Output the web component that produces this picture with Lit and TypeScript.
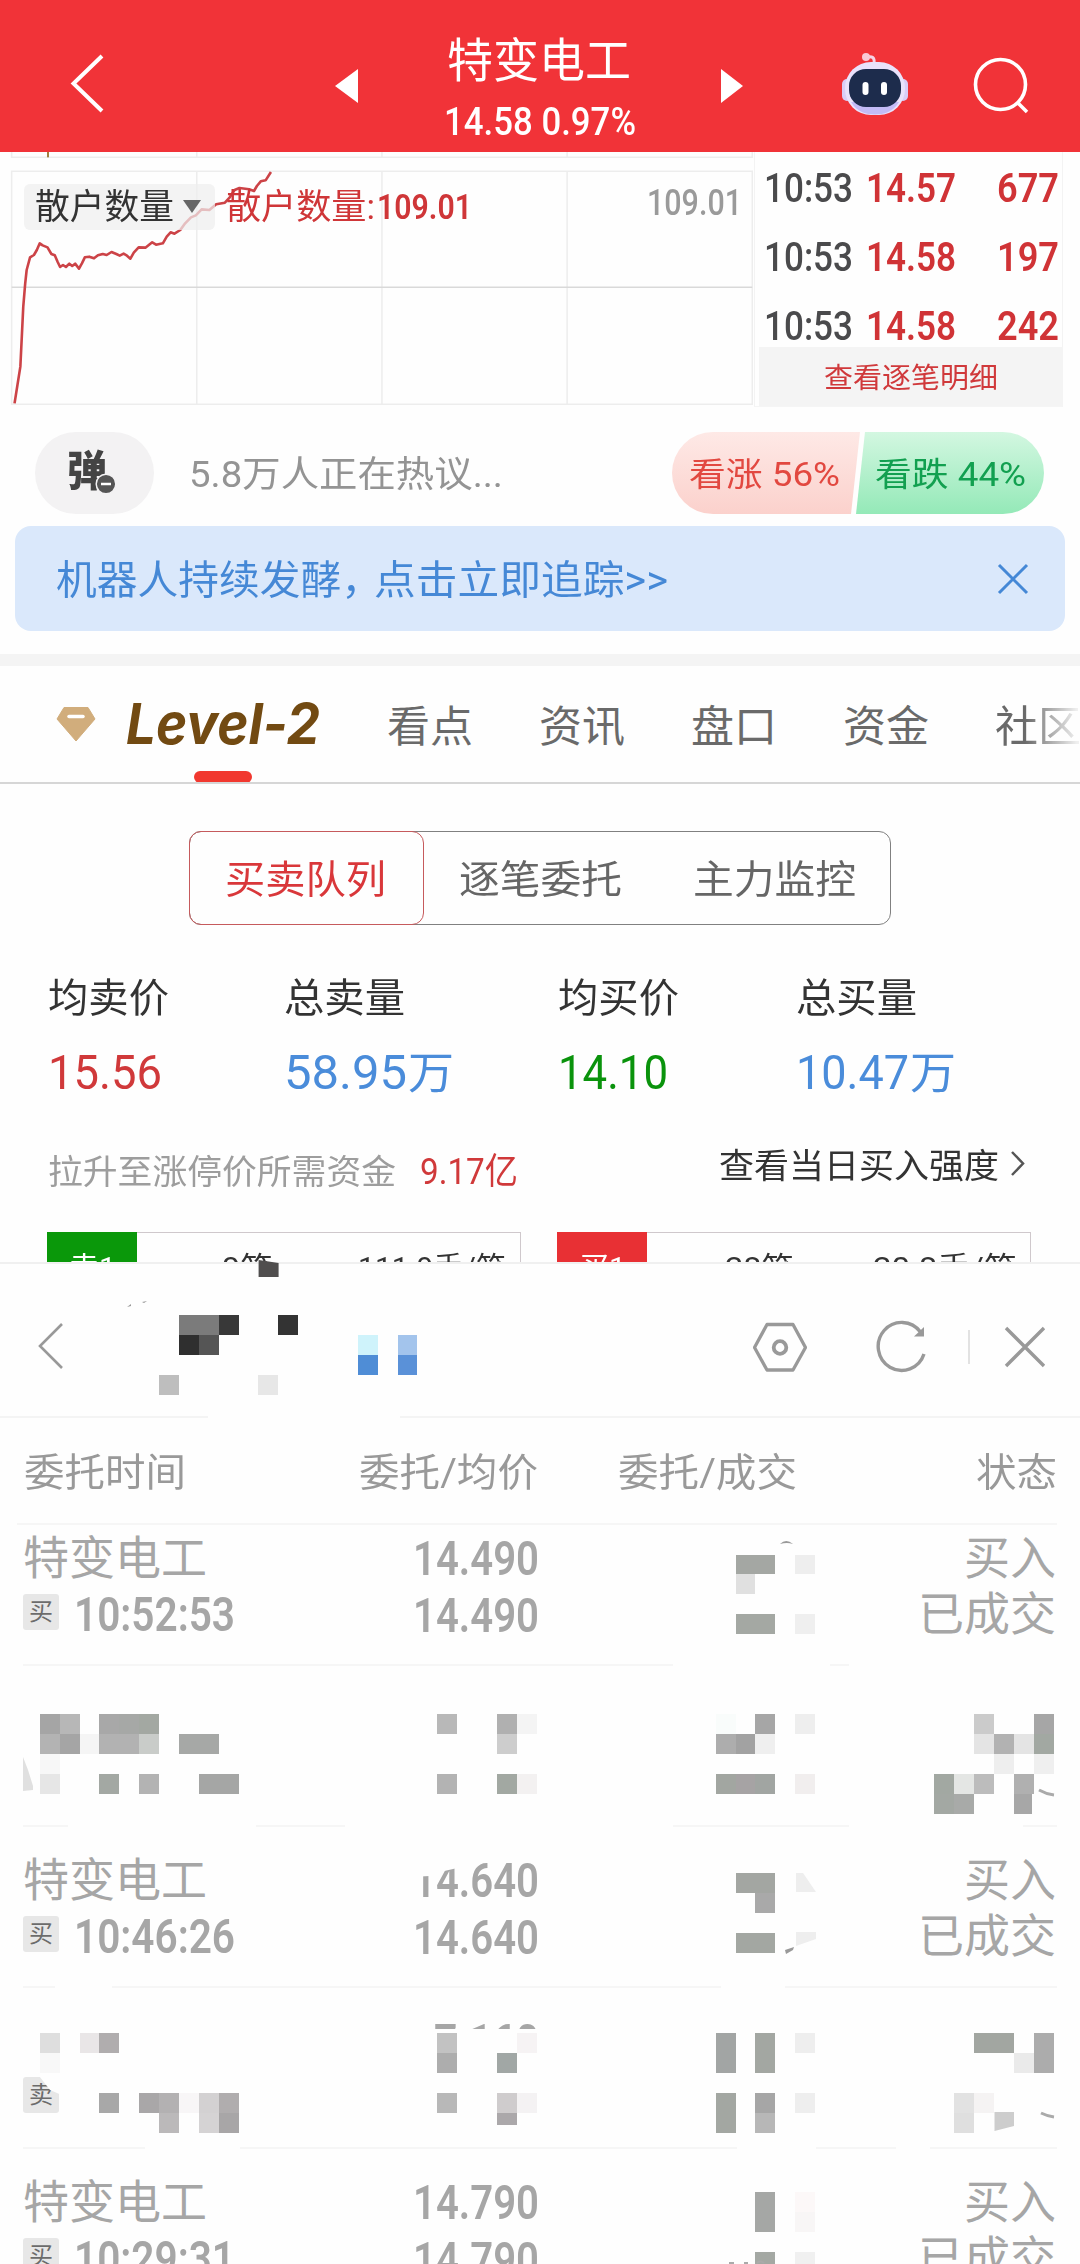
import { LitElement, html, css, svg } from "lit";
import { customElement, property } from "lit/decorators.js";

/** One line of text stretched or squeezed horizontally to an exact width. */
@customElement("fit-text")
class FitText extends LitElement {
  @property({ type: Number }) w = 100;
  @property() text = "";
  static styles = css`
    :host { display: block; flex: none; white-space: nowrap; }
    .in { display: inline-block; transform-origin: 0 50%; vertical-align: top; }
  `;
  render() {
    return html`<span class="in">${this.text}</span>`;
  }
  updated() {
    const el = this.renderRoot.querySelector(".in") as HTMLElement;
    el.style.transform = "none";
    const natural = el.getBoundingClientRect().width;
    this.style.width = `${this.w}px`;
    if (natural > 0) el.style.transform = `scaleX(${this.w / natural})`;
  }
}

const fit = (text: string, w: number, cls = "") =>
  html`<fit-text class=${cls} .text=${text} .w=${w}></fit-text>`;

type Cell = [number, number, number, number, string];
const CW = 19.88;
const CH = 19.93;

/* Privacy mosaic: column, row, columns wide, rows tall, colour. */
const mosaic: Cell[] = [
  [9, 66, 2, 1, "#7b7b7b"], [11, 66, 1, 1, "#383838"], [14, 66, 1, 1, "#333333"],
  [9, 67, 1, 1, "#2f2f2f"], [10, 67, 1, 1, "#555555"], [8, 69, 1, 1, "#bebebe"], [13, 69, 1, 1, "#e7e7e7"],
  [18, 67, 1, 1, "#cff3fb"], [20, 67, 1, 1, "#a3c4ec"], [18, 68, 1, 1, "#4f8dd6"], [20, 68, 1, 1, "#5a91d8"],

  [37, 78, 2, 1, "#a4a7a3"], [40, 78, 1, 1, "#eeeeee"], [37, 79, 1, 1, "#e0e0e0"],
  [37, 81, 2, 1, "#a4a8a3"], [40, 81, 1, 1, "#efefef"],

  [2, 86, 1, 1, "#a5a5a5"], [3, 86, 1, 1, "#b7b7b7"], [5, 86, 1, 1, "#a8a8a8"], [6, 86, 1, 1, "#a6a8a6"], [7, 86, 1, 1, "#a3a8a2"],
  [2, 87, 1, 1, "#b3b3b3"], [3, 87, 1, 1, "#a5a5a5"], [4, 87, 1, 1, "#f5f5f5"], [5, 87, 2, 1, "#b2b2b2"], [7, 87, 1, 1, "#c9ccc9"], [9, 87, 2, 1, "#a6a8a6"],
  [2, 88, 1, 1, "#f7f7f7"], [2, 89, 1, 1, "#e6e6e6"], [5, 89, 1, 1, "#a3a8a3"], [7, 89, 1, 1, "#b3b3b3"], [10, 89, 2, 1, "#a5a6a5"],
  [22, 86, 1, 1, "#b8b8b8"], [25, 86, 1, 1, "#b0b0b0"], [26, 86, 1, 1, "#f4f4f4"], [25, 87, 1, 1, "#cdcdcd"],
  [22, 89, 1, 1, "#b3b3b3"], [25, 89, 1, 1, "#a2a8a2"], [26, 89, 1, 1, "#f3f1f1"],
  [38, 86, 1, 1, "#a6a6a6"], [40, 86, 1, 1, "#eeeeee"], [36, 86, 1, 1, "#f9fcfb"],
  [36, 87, 1, 1, "#adadad"], [37, 87, 1, 1, "#a2a2a2"], [38, 87, 1, 1, "#efefef"],
  [36, 89, 1, 1, "#a2a6a1"], [37, 89, 1, 1, "#a6a3a4"], [38, 89, 1, 1, "#a1a5a2"], [40, 89, 1, 1, "#f1eeee"],
  [49, 86, 1, 1, "#cbcbcb"], [52, 86, 1, 1, "#a6a6a6"], [49, 87, 1, 1, "#e4e4e4"], [50, 87, 1, 1, "#b2b2b2"], [51, 87, 1, 1, "#e4e4e4"], [52, 87, 1, 1, "#a2a8a2"],
  [50, 88, 1, 1, "#eeeeee"], [52, 88, 1, 1, "#efefef"],
  [47, 89, 1, 1, "#a2a8a2"], [48, 89, 1, 1, "#e4e6e4"], [49, 89, 1, 1, "#bcbcbc"], [51, 89, 1, 1, "#b0b0b0"],
  [47, 90, 1, 1, "#a3a8a3"], [48, 90, 1, 1, "#a8aaa8"], [51, 90, 0.9, 1, "#a7a7a7"],

  [37, 94, 2, 1, "#a3a6a2"], [38, 95, 1, 1, "#a9a9a9"], [37, 97, 2, 1, "#a3a7a2"],

  [2, 102, 1, 1, "#dedede"], [4, 102, 1, 1, "#e9e6e7"], [5, 102, 1, 1, "#b0adae"], [2, 103, 1, 1, "#f8f8f8"],
  [5, 105, 1, 1, "#a8a8a8"], [7, 105, 1, 1, "#a9a7a8"], [8, 105, 1, 1, "#b3b1b2"], [9, 105, 1, 1, "#f8f6f7"], [10, 105, 1, 1, "#d3d1d2"], [11, 105, 1, 1, "#b0adae"],
  [8, 106, 1, 1, "#bbb9ba"], [10, 106, 1, 1, "#d5d3d4"], [11, 106, 1, 1, "#a8a6a7"],
  [22, 102, 1, 1, "#c2c2c2"], [26, 102, 1, 1, "#f6f3f4"], [22, 103, 1, 1, "#adadad"], [25, 103, 1, 1, "#a1a7a5"],
  [22, 105, 1, 1, "#b8b8b8"], [25, 105, 1, 1, "#cfcccd"], [26, 105, 1, 1, "#f4f2f3"], [25, 106, 1, 0.6, "#aba8aa"],
  [36, 102, 1, 2, "#a2a5a4"], [38, 102, 1, 2, "#a3a7a2"], [40, 102, 1, 1, "#eeeeee"],
  [36, 105, 1, 2, "#a3a7a2"], [38, 105, 1, 1, "#a6a6a6"], [38, 106, 1, 1, "#b7b7b7"], [40, 105, 1, 1, "#eeeeee"],
  [49, 102, 2, 1, "#a2a6a1"], [52, 102, 1, 2, "#acacac"], [51, 103, 1, 1, "#eaeaea"],
  [48, 105, 1, 1, "#e2e2e2"], [49, 105, 1, 1, "#f5f3f3"], [48, 106, 1, 1, "#dfdfdf"],

  [38, 110, 1, 2, "#a5a7a5"], [40, 110, 1, 1, "#fcf8f8"], [40, 111, 1, 1, "#f8f6f6"],
  [38, 113, 1, 1, "#a4a8a3"], [40, 113, 1, 1, "#f0f0f0"],
];

/* Stretches of the dividers hidden by the mosaic brush: x, y, width. */
const gaps: [number, number, number][] = [
  [208, 1415, 192], [673, 1662, 157], [849, 1662, 208],
  [68, 1823, 188], [345, 1823, 328], [849, 1823, 174],
  [55, 1984, 57], [721, 1984, 64],
  [145, 2145, 95], [737, 2145, 79], [896, 2145, 34],
];

interface Order {
  name?: string;
  side?: string;
  time?: string;
  price?: string;
  avg?: string;
  status?: boolean;
}
const orders: Order[] = [
  { name: "特变电工", side: "买", time: "10:52:53", price: "14.490", avg: "14.490", status: true },
  {},
  { name: "特变电工", side: "买", time: "10:46:26", price: "14.640", avg: "14.640", status: true },
  { side: "卖", price: "7.160" },
  { name: "特变电工", side: "买", time: "10:29:31", price: "14.790", avg: "14.790", status: true },
];

@customElement("app-root")
class AppRoot extends LitElement {
  static styles = css`
    :host {
      display: block; position: relative; width: 1080px; height: 2264px; overflow: hidden;
      background: #fefefe; color: #333;
      font-family: Roboto, "Noto Sans CJK SC", sans-serif; font-weight: 400;
    }
    * { box-sizing: border-box; }
    svg { display: block; flex: none; }

    .header { display: flex; height: 152px; background: #f13338; color: #fff; }
    .header .back { margin: 54px 0 0 70px; }
    .header .prev { margin: 69px 0 0 230px; }
    .header .next { margin: 69px 0 0 0; }
    .header .bot { margin: 52px 0 0 98px; }
    .header .find { margin: 56px 0 0 64px; }
    .title { width: 363px; display: flex; flex-direction: column; align-items: center; }
    .title .name { font-size: 47px; line-height: 50px; margin: 36px 0 0 -1px; }
    .title .quote { font-size: 38px; line-height: 40px; margin: 16px 0 0 1px; font-weight: 500; }

    .market { display: flex; height: 268px; }
    .chart { position: relative; width: 760px; height: 268px; }
    .plot { position: absolute; left: 0; top: 0; }
    .legend { position: relative; display: flex; align-items: center; padding: 30px 0 0 24px; line-height: 46px; }
    .pill { display: flex; align-items: center; width: 191px; height: 46px; padding-left: 11px; background: rgba(238, 238, 238, .72); border-radius: 6px; font-size: 35px; color: #333; }
    .pill .txt { padding-top: 3px; }
    .pill svg { margin-left: 9px; }
    .legend .lname { margin-left: 11px; font-size: 35px; color: #cf3638; padding-top: 3px; }
    .legend .lval { margin-left: 2px; font-size: 35px; font-weight: 600; color: #cf3638; padding-top: 3px; }
    .legend .lmax { margin-left: 175px; font-size: 36px; font-weight: 500; color: #9a9a9a; margin-top: -8px; }
    .ticks { width: 309px; height: 255px; border-right: 1px solid #f3f3f3; border-left: 1px solid #f3f3f3; border-bottom: 1px solid #f5f5f5; margin-left: -6px; padding-top: 2px; }
    .tick { display: flex; height: 69px; line-height: 69px; padding-left: 9px; font-size: 40px; font-weight: 600; color: #d03336; }
    .tick .t { color: #4a4a4c; font-weight: 500; }
    .tick .p { margin-left: 13px; }
    .tick .v { margin-left: 41px; }
    .more { margin: -14px 0 0 4px; width: 304px; height: 59px; background: #f4f4f4; color: #d0393b; font-size: 28px; line-height: 64px; display: flex; justify-content: center; }

    .talk { display: flex; align-items: center; height: 106px; padding: 0 0 0 35px; }
    .danmu { position: relative; width: 119px; height: 82px; border-radius: 41px; background: #f3f2f3; padding-left: 32px; font-size: 42px; line-height: 79px; font-weight: 900; color: #444; }
    .danmu svg { position: absolute; left: 60px; top: 41px; }
    .talk .hot { margin-left: 35px; font-size: 36px; line-height: 84px; padding-top: 4px; color: #949494; }
    .poll { position: relative; display: flex; width: 372px; height: 82px; margin-left: 169px; border-radius: 41px; overflow: hidden; font-size: 33px; line-height: 85px; }
    .poll svg { position: absolute; left: 0; top: 0; }
    .poll .up { position: relative; margin-left: 17px; color: #e24840; }
    .poll .down { position: relative; margin-left: 35px; color: #12a050; }

    .banner { display: flex; justify-content: space-between; align-items: center; height: 105px; margin: 0 15px; padding: 0 36px 0 41px; border-radius: 16px; background: #dae8fb; color: #4588d6; font-size: 40px; line-height: 100px; }
    .banner .msg { display: flex; padding-top: 5px; }
    .banner .go { margin-left: -8px; }
    .band { height: 12px; margin-top: 23px; background: #f4f4f4; }

    .tabs { display: flex; height: 118px; border-bottom: 2px solid #d6d6d6; line-height: 123px; font-size: 43px; color: #6a6a6a; overflow: hidden; }
    .tabs .gem { margin: 40px 0 0 56px; }
    .tabs .l2 { position: relative; margin-left: 30px; }
    .tabs .l2 .lv { font-family: Inter, Roboto, sans-serif; font-weight: 700; font-style: italic; font-size: 56px; line-height: 117px; color: #724a12; }
    .bar { position: absolute; left: 68px; bottom: -1px; width: 58px; height: 12px; border-radius: 6px; background: #f1382f; }
    .tabs .tab { margin-left: 66px; }
    .tabs .tab.first { margin-left: 67px; }
    .fade { -webkit-mask-image: linear-gradient(90deg, #000 35%, rgba(0, 0, 0, .1) 95%); }

    .seg { display: flex; width: 702px; height: 94px; margin: 47px 0 0 189px; border: 1px solid #808080; border-radius: 12px; font-size: 39px; line-height: 96px; color: #666; }
    .seg .on { width: 235px; height: 94px; margin: -1px 0 0 -1px; border: 1px solid #c65a5c; border-radius: 12px; color: #d9373a; padding-left: 35px; }
    .seg .b { margin-left: 35px; }
    .seg .c { margin-left: 71px; }

    .stats { display: grid; grid-template-columns: 236px 274px 238px 240px; padding: 49px 0 0 48px; height: 181px; }
    .stats .lab { font-size: 40px; line-height: 49px; height: 48px; color: #333; }
    .stats .val { display: flex; font-size: 48px; line-height: 56px; margin-top: 23px; }
    .red { color: #d0393a; } .blue { color: #4a8cda; } .green { color: #0a930c; }
    .stats .wan { font-size: 44px; margin-left: 1px; line-height: 58px; }

    .note { display: flex; padding-left: 48px; height: 40px; margin-top: 45px; font-size: 34px; line-height: 43px; color: #9d9d9d; }
    .note .amt { margin-left: 24px; font-size: 36px; }
    .note .link { margin: -6px 0 0 201px; color: #333; }
    .note svg { margin: -1px 0 0 11px; }

    .books { display: flex; height: 30px; margin-top: 41px; padding-left: 47px; overflow: hidden; font-size: 30px; line-height: 69px; }
    .book { display: flex; width: 474px; height: 72px; border: 1px solid #cfc8cc; border-left: 0; color: #333; }
    .book + .book { margin-left: 36px; }
    .side { width: 90px; height: 72px; margin-top: -1px; padding: 1px 0 0 22px; background: #0a980a; color: #fff; }
    .side.r { background: #e83034; }
    .book .n { margin-left: 85px; }
    .book .q { margin-left: 85px; }
    .book .n2 { margin-left: 78px; }
    .book .q2 { margin-left: 79px; }

    .panel { height: 1001px; border-top: 2px solid #f0f0f0; background: #fefefe; }
    .bartop { display: flex; height: 154px; border-bottom: 2px solid #f4f4f4; }
    .bartop .b1 { margin: 58px 0 0 37px; }
    .bartop .b2 { margin: 58px 0 0 690px; }
    .bartop .b3 { margin: 56px 0 0 69px; }
    .bartop .sep { width: 2px; height: 34px; margin: 66px 0 0 40px; background: #e2e2e2; }
    .bartop .b4 { margin: 62px 0 0 34px; }
    .cols { display: flex; height: 107px; margin: 0 23px 0 17px; padding-left: 7px; border-bottom: 2px solid #f6f6f6; font-size: 39px; line-height: 111px; color: #999; }
    .cols .c2 { margin-left: 173px; }
    .cols .c3 { margin-left: 80px; }
    .cols .c4 { margin-left: 179px; }
    .clip { height: 739px; overflow: hidden; }
    .list { margin-top: -20px; }
    .row { display: flex; height: 161px; margin: 0 23px; border-bottom: 2px solid #f6f6f6; padding-top: 26px; color: #a6a6a6; font-size: 46px; }
    .who { width: 390px; }
    .who .nm { line-height: 54px; height: 54px; }
    .who .sub { display: flex; align-items: center; height: 56px; }
    .badge { width: 36px; height: 36px; margin-top: -2px; border-radius: 3px; background: #e7e7e7; color: #6c6c6c; font-size: 24px; line-height: 37px; text-align: center; }
    .who .tm { margin-left: 15px; font-size: 48px; line-height: 54px; font-weight: 600; margin-top: 3px; }
    .pr { width: 128px; font-size: 48px; font-weight: 600; line-height: 57px; margin-top: -1px; }
    .pr .short { margin-left: 21px; }
    .st { width: 515px; display: flex; flex-direction: column; align-items: flex-end; line-height: 56px; }
    .st .s1 { margin-top: -1px; }

    .over { position: absolute; left: 0; top: 0; pointer-events: none; }
  `;

  private chart() {
    return html`<svg class="plot" width="760" height="268" viewBox="0 36 1568 804" preserveAspectRatio="none" fill="none">
      <g stroke="#ededed" stroke-width="1.5">
        <path vector-effect="non-scaling-stroke" d="M24 36V52H1552V36M406 36V52M788 36V52M1170 36V52"></path>
        <path vector-effect="non-scaling-stroke" d="M24 94H1552V793H24ZM406 94V793M788 94V793M1170 94V793"></path>
        <path stroke="#d9d9d9" vector-effect="non-scaling-stroke" d="M24 442H1552"></path>
      </g>
      <path vector-effect="non-scaling-stroke" stroke="#a08040" stroke-width="2" d="M99 36V52"></path>
      <path vector-effect="non-scaling-stroke" stroke="#cc4347" stroke-width="2.6" stroke-linejoin="round"
        d="M30 790L36 735L42 680L45 590L48 500L52 430L55 390L62 352L70 345L76 330L82 310L88 316L98 322L106 342L113 346L119 366L124 381L130 375L136 381L143 371L149 378L155 371L163 386L169 370L175 352L184 350L194 355L202 346L212 342L220 345L230 336L240 342L247 347L255 341L262 347L269 356L276 338L286 322L300 323L314 307L322 314L336 310L344 290L352 277L360 281L372 270L382 250L394 232L404 226L416 208L432 210L446 193L464 188L474 172L484 150L494 144L514 148L524 153L530 138L538 124L548 121L559 96"></path>
    </svg>`;
  }

  private overlay() {
    return html`<svg class="over" width="1080" height="2264" viewBox="0 0 1080 2264">
      <g fill="#fefefe">
        ${gaps.map(([x, y, w]) => svg`<rect x=${x} y=${y} width=${w} height="5"></rect>`)}
        <path d="M410 1852H474L466 1866L440 1872L430 1876L410 1877Z"></path>
        <rect x="410" y="2029" width="130" height="42"></rect>
        <path d="M36 2072H64V2096L50 2090Z"></path>
      </g>
      <g shape-rendering="crispEdges">
        ${mosaic.map(([c, r, w, h, f]) => svg`<rect x=${c * CW} y=${r * CH} width=${w * CW} height=${h * CH} fill=${f}></rect>`)}
      </g>
      <path fill="#504e4e" d="M258.600 1260L278.600 1263V1277H258.600Z"></path>
      <path fill="#999" d="M127 1307L131 1304V1306ZM142 1302L147 1301L144 1303Z"></path>
      <path fill="#999" d="M780 1544Q786 1538 793 1544Q787 1542 780 1544Z"></path>
      <path fill="#e0e0e0" d="M23 1757L28 1770L33 1786V1790L23 1791Z"></path>
      <path fill="#eee" d="M796 1873H803L816 1892H796ZM796 1932H816V1939L796 1946Z"></path>
      <path fill="#999" d="M785 1950L794 1947L793 1950L786 1954Z"></path>
      <path fill="#cdcdcd" d="M994.500 2112H1014V2126L994.500 2131Z"></path>
      <path d="M1039 1790Q1046 1794 1054 1795M1041 2113Q1047 2116 1054 2117" stroke="#aaa" stroke-width="3" fill="none"></path>
      <path d="M729 2263H734M744 2263H748M757 2263Q760 2260 764 2263" stroke="#aaa" stroke-width="2" fill="none"></path>
    </svg>`;
  }

  render() {
    return html`
      <div class="header">
        <svg class="back" width="34" height="59" viewBox="0 0 34 59" fill="none" stroke="#fff" stroke-width="4"><path d="M32 2L3.500 29.500L32 57"></path></svg>
        <svg class="prev" width="24" height="34" viewBox="0 0 24 34" fill="#fff"><path d="M24 0V34L1 17Z"></path></svg>
        <div class="title">
          ${fit("特变电工", 184, "name")}
          ${fit("14.58 0.97%", 192, "quote")}
        </div>
        <svg class="next" width="22" height="34" viewBox="0 0 22 34" fill="#fff"><path d="M0 0V34L22 17Z"></path></svg>
        <svg class="bot" width="68" height="66" viewBox="0 0 68 66">
          <path d="M33 12C34 5 31 4 26 5" fill="none" stroke="#f6d3e4" stroke-width="3"></path>
          <circle cx="25" cy="5" r="4" fill="#f9c9d6"></circle>
          <rect x="1" y="27" width="10" height="22" rx="5" fill="#d9cdf7"></rect>
          <rect x="57" y="27" width="10" height="22" rx="5" fill="#d9cdf7"></rect>
          <rect x="4" y="10" width="60" height="53" rx="26" fill="#e9e2fb"></rect>
          <path d="M10 50C16 60 25 62.500 34 62.500S52 60 58 50Z" fill="#c3bbf6"></path>
          <rect x="8" y="17" width="52" height="38" rx="17" fill="#1d2c4c"></rect>
          <rect x="21.500" y="30" width="6" height="13" rx="3" fill="#fff"></rect>
          <rect x="40" y="30" width="6" height="13" rx="3" fill="#fff"></rect>
        </svg>
        <svg class="find" width="60" height="60" viewBox="0 0 60 60" fill="none" stroke="#fff" stroke-width="3.600"><circle cx="27.500" cy="28.500" r="25"></circle><path d="M44.500 46.500L54 56"></path></svg>
      </div>

      <div class="market">
        <div class="chart">
          ${this.chart()}
          <div class="legend">
            <div class="pill">${fit("散户数量", 139, "txt")}<svg width="18" height="13" viewBox="0 0 18 13" fill="#666"><path d="M0 0H18L9 13Z"></path></svg></div>
            ${fit("散户数量:", 149, "lname")}
            ${fit("109.01", 95, "lval")}
            ${fit("109.01", 95, "lmax")}
          </div>
        </div>
        <div class="ticks">
          ${[["14.57", "677"], ["14.58", "197"], ["14.58", "242"]].map(([p, v]) => html`<div class="tick">
            ${fit("10:53", 89, "t")}${fit(p, 90, "p")}${fit(v, 62, "v")}
          </div>`)}
          <div class="more">${fit("查看逐笔明细", 174)}</div>
        </div>
      </div>

      <div class="talk">
        <div class="danmu">${fit("弹", 40)}<svg width="24" height="24" viewBox="0 0 24 24"><circle cx="11" cy="11" r="9.800" fill="#555" stroke="#f3f2f3" stroke-width="1.500"></circle><path d="M6 11H16" stroke="#fff" stroke-width="2.500"></path></svg></div>
        ${fit("5.8万人正在热议...", 314, "hot")}
        <div class="poll">
          <svg width="372" height="82" viewBox="0 0 372 82">
            <defs>
              <linearGradient id="r" x2="0" y2="1"><stop stop-color="#fee9e6"></stop><stop offset="1" stop-color="#fbd1cc"></stop></linearGradient>
              <linearGradient id="g" x2="0" y2="1"><stop stop-color="#d3f7e1"></stop><stop offset="1" stop-color="#94e9b8"></stop></linearGradient>
            </defs>
            <path fill="url(#r)" d="M0 0H188L179 82H0Z"></path>
            <path fill="url(#g)" d="M193 0H372V82H184Z"></path>
          </svg>
          ${fit("看涨 56%", 151, "up")}${fit("看跌 44%", 151, "down")}
        </div>
      </div>

      <div class="banner">
        <div class="msg">${fit("机器人持续发酵，", 326)}${fit("点击立即追踪>>", 294, "go")}</div>
        <svg width="32" height="32" viewBox="0 0 32 32" stroke="#4588d6" stroke-width="3"><path d="M2 2L30 30M30 2L2 30"></path></svg>
      </div>
      <div class="band"></div>

      <div class="tabs">
        <svg class="gem" width="40" height="36" viewBox="0 0 40 36"><path d="M8 1.500H32L39 13L20 35L1 13Z" fill="#d1ad7c" stroke="#d1ad7c" stroke-linejoin="round"></path><path d="M13 10.500H27" stroke="#fff" stroke-width="3.500" stroke-linecap="round"></path></svg>
        <div class="l2">${fit("Level-2", 194, "lv")}<div class="bar"></div></div>
        ${fit("看点", 86, "tab first")}${fit("资讯", 86, "tab")}${fit("盘口", 86, "tab")}${fit("资金", 86, "tab")}${fit("社区", 86, "tab fade")}
      </div>

      <div class="seg">
        <div class="on">${fit("买卖队列", 161)}</div>
        ${fit("逐笔委托", 163, "b")}${fit("主力监控", 163, "c")}
      </div>

      <div class="stats">
        <div>${fit("均卖价", 121, "lab")}<div class="val red">${fit("15.56", 114)}</div></div>
        <div>${fit("总卖量", 121, "lab")}<div class="val blue">${fit("58.95", 123)}${fit("万", 46, "wan")}</div></div>
        <div>${fit("均买价", 121, "lab")}<div class="val green">${fit("14.10", 110)}</div></div>
        <div>${fit("总买量", 121, "lab")}<div class="val blue">${fit("10.47", 113)}${fit("万", 46, "wan")}</div></div>
      </div>

      <div class="note">
        ${fit("拉升至涨停价所需资金", 348)}${fit("9.17亿", 98, "amt red")}${fit("查看当日买入强度", 280, "link")}
        <svg width="15" height="28" viewBox="0 0 15 28" fill="none" stroke="#555" stroke-width="2.500"><path d="M2 2L13 13.500L2 25"></path></svg>
      </div>

      <div class="books">
        <div class="book"><div class="side">${fit("卖1", 47)}</div>${fit("9笔", 51, "n")}${fit("111.9手/笔", 148, "q")}</div>
        <div class="book"><div class="side r">${fit("买1", 47)}</div>${fit("28笔", 69, "n2")}${fit("20.8手/笔", 144, "q2")}</div>
      </div>

      <div class="panel">
        <div class="bartop">
          <svg class="b1" width="26" height="48" viewBox="0 0 26 48" fill="none" stroke="#999" stroke-width="2.600"><path d="M25 2L3 24L25 46"></path></svg>
          <svg class="b2" width="54" height="50" viewBox="0 0 54 50" fill="none" stroke="#999"><path d="M14 2.500H40L52.500 25.500L40 48H14L1.500 25.500Z" stroke-width="3.300" stroke-linejoin="round"></path><circle cx="27" cy="25.500" r="6.300" stroke-width="3.800"></circle></svg>
          <svg class="b3" width="52" height="54" viewBox="0 0 52 54" fill="none" stroke="#999" stroke-width="3.400"><path d="M48 34A23.500 24 0 1 1 44.500 12"></path><path d="M48 7V16.500H38Z" fill="#999" stroke="none"></path></svg>
          <div class="sep"></div>
          <svg class="b4" width="42" height="42" viewBox="0 0 42 42" stroke="#999" stroke-width="3.400"><path d="M2 2L40 40M40 2L2 40"></path></svg>
        </div>
        <div class="cols">
          ${fit("委托时间", 162)}${fit("委托/均价", 179, "c2")}${fit("委托/成交", 179, "c3")}${fit("状态", 81, "c4")}
        </div>
        <div class="clip"><div class="list">
          ${orders.map((o) => html`<div class="row">
            <div class="who">
              <div class="nm">${o.name ? fit(o.name, 184) : ""}</div>
              <div class="sub">${o.side ? html`<div class="badge">${o.side}</div>` : ""}${o.time ? fit(o.time, 161, "tm") : ""}</div>
            </div>
            <div class="pr">
              ${o.price ? (o.avg ? fit(o.price, 126) : fit(o.price, 105, "short")) : ""}
              ${o.avg ? fit(o.avg, 126) : ""}
            </div>
            <div class="st">
              ${o.status ? html`${fit("买入", 92, "s1")}${fit("已成交", 138)}` : ""}
            </div>
          </div>`)}
        </div></div>
      </div>
      ${this.overlay()}
    `;
  }
}
